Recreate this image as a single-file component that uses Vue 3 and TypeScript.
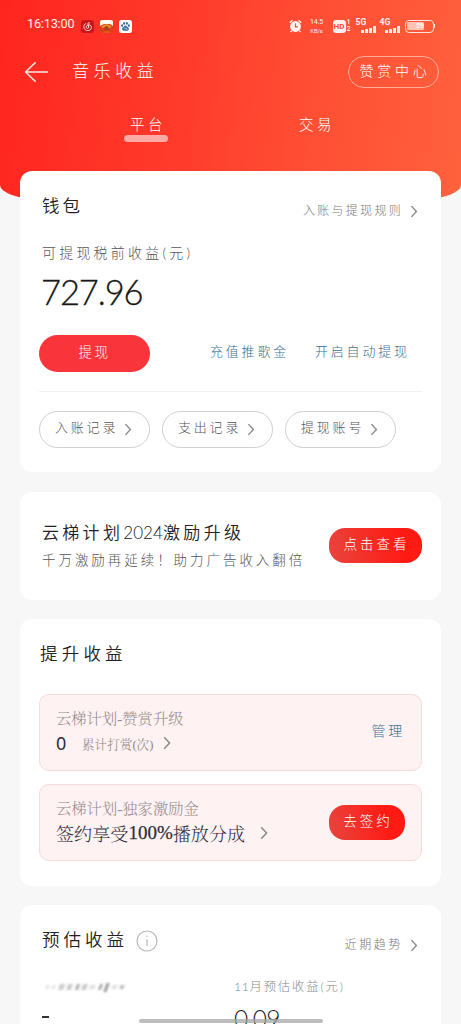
<script setup lang="ts">
interface LinkPill {
  label: string
}

const records: LinkPill[] = [{ label: '入账记录' }, { label: '支出记录' }, { label: '提现账号' }]
const bars: number[] = [3, 4, 5.5, 7]
</script>

<template>
  <main class="page">
    <svg class="sprite" width="0" height="0">
      <symbol id="chevron" viewBox="0 0 8 14">
        <path d="M1.2 1.2 L6.6 7 L1.2 12.8" fill="none" stroke="currentColor" stroke-width="1.5" />
      </symbol>
    </svg>

    <header class="header">
      <div class="status">
        <span class="clock">16:13:00</span>
        <svg class="app first" viewBox="0 0 13 13">
          <rect width="13" height="13" rx="3" fill="#c9151b" />
          <path d="M8.8 3 C7.3 2.3 6.7 3.1 7 4.3 L7.7 7.1 C7.8 8.8 5.4 8.9 5.2 7.3 C5 5.7 6.5 4.8 8 4.9 C11 5.2 11.2 9.2 8.4 10.3 C5.5 11.3 2.7 9.4 2.8 6.7 C2.9 5.1 3.8 4 5 3.5" fill="none" stroke="#ffdcd8" stroke-width="1" />
        </svg>
        <svg class="app" viewBox="0 0 13 13">
          <rect width="13" height="13" rx="2.5" fill="#e23b1d" />
          <path d="M0 1.5 Q0 0 2 0 H11 Q13 0 13 1.5 V6 L10 4 H4 L0 6Z" fill="#fff2df" />
          <path d="M3 0 H10 V3 H3Z" fill="#fff" />
          <path d="M1 7 Q6.5 1.5 12 7 L9 8 H4Z" fill="#e9962c" />
          <circle cx="6.5" cy="8.4" r="2.3" fill="#a84318" />
          <path d="M2 13 Q6.5 8 11 13Z" fill="#dc5c20" />
        </svg>
        <svg class="app" viewBox="0 0 13 13">
          <rect width="13" height="13" rx="2.5" fill="#fff" />
          <g fill="#386e9c">
            <ellipse cx="3.1" cy="5.6" rx="1" ry="1.4" />
            <ellipse cx="5.1" cy="3.4" rx="1" ry="1.4" />
            <ellipse cx="7.9" cy="3.4" rx="1" ry="1.4" />
            <ellipse cx="9.9" cy="5.6" rx="1" ry="1.4" />
            <path d="M6.5 5.4 C7.8 5.4 8 6.6 9.2 7.6 C10.6 9 9.8 10.9 8 10.7 H5 C3.2 10.9 2.4 9 3.8 7.6 C5 6.6 5.2 5.4 6.5 5.4Z" />
          </g>
          <path d="M5.8 7.6 V9.4 M7.3 7.6 V9.2 H8.4" stroke="#fff" stroke-width=".6" fill="none" />
        </svg>

        <div class="status-right">
          <svg class="alarm" viewBox="0 0 13 14">
            <circle cx="6.5" cy="7.5" r="5.4" fill="#fff3ee" />
            <path d="M.8 3.7 L3.4 1.3 M12.2 3.7 L9.6 1.3 M2.8 11.6 L1.6 13 M10.2 11.6 L11.4 13" stroke="#fff3ee" stroke-width="1.4" />
            <path d="M6.5 4.5 V7.9 H8.9" stroke="#ff4c30" stroke-width="1.2" fill="none" />
          </svg>
          <div class="speed"><span>14.5</span><span>KB/s</span></div>
          <span class="hd">HD</span>
          <div class="sim"><span>1</span><span>2</span></div>
          <div class="signal">
            <span class="net">5G</span>
            <div class="bars"><i v-for="b in bars" :key="b" :style="{ height: b + 'px' }"></i></div>
          </div>
          <div class="signal second">
            <span class="net">4G</span>
            <div class="bars"><i v-for="b in bars" :key="b" :style="{ height: b + 'px' }"></i></div>
          </div>
          <div class="battery"><span class="charge">59</span></div>
          <i class="nub"></i>
        </div>
      </div>

      <div class="titlebar">
        <svg class="back" viewBox="0 0 26 22">
          <path d="M25 11 H1.8 M12 1 L1.6 11 L12 21" fill="none" stroke="#ffe6e2" stroke-width="1.5" />
        </svg>
        <h1>音乐收益</h1>
        <button class="center">赞赏中心</button>
      </div>

      <nav class="tabs">
        <a class="tab active">平台</a>
        <a class="tab">交易</a>
      </nav>
    </header>

    <section class="card wallet">
      <div class="row wallet-head">
        <h2>钱包</h2>
        <a class="more">入账与提现规则<svg class="chev"><use href="#chevron" /></svg></a>
      </div>
      <p class="caption">可提现税前收益(元)</p>
      <p class="amount">727.96</p>
      <div class="row actions">
        <button class="withdraw">提现</button>
        <a class="blue charge-link">充值推歌金</a>
        <a class="blue">开启自动提现</a>
      </div>
      <div class="pills">
        <button v-for="r in records" :key="r.label" class="pill">
          {{ r.label }}<svg class="chev"><use href="#chevron" /></svg>
        </button>
      </div>
    </section>

    <section class="card plan">
      <div>
        <h3>云梯计划<span class="year">2024</span>激励升级</h3>
        <p class="sub">千万激励再延续！助力广告收入翻倍</p>
      </div>
      <button class="cta look">点击查看</button>
    </section>

    <section class="card boost">
      <h2>提升收益</h2>
      <div class="box">
        <div>
          <p class="box-title">云梯计划-赞赏升级</p>
          <p class="box-line"><b class="zero">0</b><span class="small">累计打赏(次)</span><svg class="chev big"><use href="#chevron" /></svg></p>
        </div>
        <a class="blue manage">管理</a>
      </div>
      <div class="box">
        <div>
          <p class="box-title">云梯计划-独家激励金</p>
          <p class="box-line strong">签约享受<span class="pct">100%</span>播放分成<svg class="chev big far"><use href="#chevron" /></svg></p>
        </div>
        <button class="cta sign">去签约</button>
      </div>
    </section>

    <section class="card estimate">
      <div class="row est-head">
        <h2>预估收益</h2>
        <svg class="info" viewBox="0 0 22 22">
          <circle cx="11" cy="11" r="10" fill="none" stroke="#b4b4b4" stroke-width="1.1" />
          <path d="M11 9.3 V16 M11 5.7 V7.1" stroke="#b4b4b4" stroke-width="1.2" />
        </svg>
        <a class="more">近期趋势<svg class="chev"><use href="#chevron" /></svg></a>
      </div>
      <div class="cols">
        <div class="col">
          <div class="smudge"><i v-for="n in 11" :key="n" :class="'m' + n"></i></div>
          <p class="dash"></p>
        </div>
        <div class="col">
          <p class="month"><span class="num">11</span>月预估收益(元)</p>
          <p class="value">0.09</p>
        </div>
      </div>
    </section>
    <div class="home-bar"></div>
  </main>
</template>

<style>
body {
  margin: 0;
  overflow: hidden;
}
</style>

<style scoped>
* {
  box-sizing: border-box;
}
h1, h2, h3, p {
  margin: 0;
  font-weight: 300;
}
button {
  border: 0;
  padding: 0;
  background: none;
  font-family: inherit;
  font-weight: 300;
}
a, span, h1, h2, h3, p, button {
  white-space: nowrap;
}
.page {
  position: relative;
  width: 461px;
  height: 1024px;
  overflow: hidden;
  background: #f7f7f7;
  font-family: Lato, "Noto Sans CJK SC", sans-serif;
  font-weight: 300;
  color: #333;
}
.sprite {
  display: block;
}
.header {
  height: 199px;
  margin-bottom: -28px;
  background: linear-gradient(97deg, #ff251f 0%, #ff3b2b 40%, #ff4d33 65%, #ff613d 100%);
  border-radius: 0 0 40px 40px / 0 0 14px 14px;
}
.status {
  display: flex;
  align-items: center;
  height: 52px;
  padding: 0 26px 0 27px;
  color: #fff0ec;
}
.clock {
  width: 54px;
  font: 400 12.7px/16px Roboto, sans-serif;
  letter-spacing: -.2px;
  margin-top: -4px;
}
.app {
  width: 13px;
  height: 13px;
  margin-right: 6px;
}
.status-right {
  display: flex;
  align-items: center;
  margin-left: auto;
}
.alarm {
  width: 13px;
  height: 14px;
}
.speed {
  display: flex;
  flex-direction: column;
  justify-content: space-between;
  align-items: center;
  width: 16px;
  height: 17px;
  margin-left: 7px;
  font: 400 7px/8px Roboto, sans-serif;
  letter-spacing: -.2px;
}
.speed span:last-child {
  font-size: 6px;
}
.hd {
  width: 13px;
  height: 13px;
  margin-left: 8px;
  border-radius: 3px;
  background: #fff0ec;
  color: #f84d34;
  font: 700 8px/13px Roboto, sans-serif;
  text-align: center;
}
.sim {
  display: flex;
  flex-direction: column;
  margin-left: 1px;
  width: 5px;
  font: 500 7px/7px Roboto, sans-serif;
}
.signal {
  position: relative;
  width: 20px;
  height: 14px;
  margin-left: 4px;
}
.net {
  display: block;
  margin-top: -1px;
  font: 700 8.5px/8px Roboto, sans-serif;
}
.bars {
  position: absolute;
  right: 0;
  bottom: 0;
  display: flex;
  align-items: flex-end;
  gap: 1px;
}
.bars i {
  width: 3px;
  background: #fff0ec;
}
.battery {
  width: 29px;
  height: 13px;
  margin-left: 5px;
  padding: 1.5px;
  border: 1px solid #ffe3dc;
  border-radius: 4px;
}
.charge {
  display: block;
  width: 17px;
  height: 8px;
  border-radius: 1.5px;
  background: #ffc2b4;
  font: 500 7px/8px Roboto, sans-serif;
  text-align: right;
  color: #fff;
}
.nub {
  width: 1.5px;
  height: 4px;
  background: #ffe3dc;
}
.titlebar {
  display: flex;
  align-items: center;
  height: 40px;
  padding: 0 22px 0 24px;
}
.back {
  width: 25px;
  height: 22px;
}
h1 {
  margin: -3px 0 0 23px;
  font-size: 17px;
  line-height: 24px;
  letter-spacing: 4.6px;
  color: #fff;
}
.center {
  width: 91px;
  height: 32px;
  margin-left: auto;
  padding: 0 0 4px 3px;
  border: 1px solid #ffad9c;
  border-radius: 16px;
  font-size: 14px;
  letter-spacing: 3.8px;
  color: #fff;
}
.tabs {
  display: flex;
  padding: 23px 0 0 124px;
}
.tab {
  position: relative;
  width: 44px;
  height: 27px;
  margin-right: 125px;
  padding-left: 6px;
  font-size: 14.5px;
  line-height: 20px;
  letter-spacing: 3.5px;
  color: #fff;
}
.active::after {
  content: "";
  display: block;
  width: 44px;
  height: 7px;
  margin-left: -6px;
  border-radius: 3.5px;
  background: #ffaaa5;
}
.card {
  position: relative;
  width: 421px;
  margin: 0 20px 20px;
  border-radius: 12px;
  background: #fff;
}
.row {
  display: flex;
  align-items: center;
}
.wallet {
  height: 301px;
  padding: 23px 19px 0;
  margin-bottom: 20px;
}
h2 {
  font-size: 17.5px;
  line-height: 24px;
  letter-spacing: 4.2px;
  color: #222;
  font-weight: 350;
}
.wallet-head {
  height: 24px;
  padding: 0 4px 0 3px;
}
.wallet-head h2 {
  letter-spacing: 3px;
}
.more {
  display: flex;
  align-items: center;
  margin-left: auto;
  font-size: 12px;
  letter-spacing: 2.3px;
  color: #777;
}
.wallet .more {
  margin-top: 6px;
}
.chev {
  width: 8px;
  height: 13px;
  color: #888;
}
.more .chev {
  margin: 4px 0 0 7px;
}
.caption {
  margin: 25px 0 0 3px;
  font-size: 14px;
  line-height: 20px;
  letter-spacing: 3.2px;
  color: #555;
}
.amount {
  margin: 8px 0 0 2px;
  font: 300 34.5px/42px Lato, sans-serif;
  letter-spacing: -1.1px;
  -webkit-text-stroke: .3px #181818;
  color: #181818;
}
.actions {
  height: 37px;
  margin-top: 22px;
}
.withdraw {
  width: 111px;
  height: 37px;
  padding-bottom: 5px;
  border-radius: 19px;
  background: #fa343b;
  color: #fff;
  font-size: 13.5px;
  letter-spacing: 2.5px;
}
.blue {
  margin-top: -6px;
  font-size: 13px;
  letter-spacing: 2.8px;
  color: #39718f;
}
.charge-link {
  margin: -6px 26px 0 60px;
}
.pills {
  display: flex;
  gap: 12px;
  margin-top: 19px;
  padding-top: 19px;
  border-top: 1px solid #f0f0f0;
}
.pill {
  display: flex;
  align-items: center;
  width: 111px;
  height: 37px;
  padding: 0 0 7px 15px;
  border: 1px solid #d0d0d0;
  border-radius: 19px;
  color: #555;
  font-size: 13px;
  letter-spacing: 2.8px;
}
.pill .chev {
  margin: 7px 0 0 6px;
}
.plan {
  display: flex;
  align-items: flex-start;
  justify-content: space-between;
  height: 108px;
  margin-bottom: 19px;
  padding: 29px 19px 0 22px;
}
h3 {
  font-size: 17px;
  line-height: 24px;
  letter-spacing: 3.3px;
  font-weight: 350;
  color: #222;
}
.year {
  letter-spacing: .1px;
}
.sub {
  margin-top: 5px;
  font-size: 13.5px;
  line-height: 20px;
  letter-spacing: 2.95px;
  color: #555;
}
.cta {
  height: 35px;
  padding: 0 0 5px 2px;
  border-radius: 16px;
  background: linear-gradient(75deg, #e8453f, #ff1b13 75%);
  color: #fff;
  font-size: 13.5px;
  letter-spacing: 3px;
}
.look {
  width: 93px;
  margin-top: 7px;
}
.boost {
  height: 267px;
  margin-bottom: 19px;
  padding: 23px 19px 0;
}
.boost h2 {
  margin: 0 0 28px 1px;
}
.box {
  display: flex;
  justify-content: space-between;
  height: 77px;
  margin-bottom: 13px;
  padding: 14px 16px 0;
  border: 1px solid #f3dcd9;
  border-radius: 10px;
  background: #fef2f2;
  font-family: "Liberation Serif", "Noto Serif CJK SC", "Noto Sans CJK SC", serif;
}
.box-title {
  font-size: 15.3px;
  line-height: 20px;
  color: #968c8e;
}
.box-line {
  display: flex;
  align-items: center;
  height: 28px;
  color: #2d2d3a;
}
.zero {
  width: 26px;
  font: 400 18px/24px "Noto Sans", sans-serif;
}
.small {
  font-size: 12.6px;
  color: #8e8688;
}
.chev.big {
  height: 14px;
  margin-left: 10px;
}
.chev.far {
  margin-left: 15px;
}
.strong {
  font-size: 18.1px;
}
.pct {
  font-family: "Liberation Serif", serif;
  font-size: 19px;
  -webkit-text-stroke: .25px #2d2d3a;
}
.manage {
  margin-top: 11px;
  font-family: Lato, "Noto Sans CJK SC", sans-serif;
  font-size: 14px;
}
.sign {
  width: 76px;
  margin-top: 6px;
  font-family: Lato, "Noto Sans CJK SC", sans-serif;
}
.estimate {
  height: 119px;
  margin-bottom: 0;
  padding: 23px 22px 0;
  border-radius: 12px 12px 0 0;
}
.est-head {
  height: 24px;
}
.est-head h2 {
  letter-spacing: 4px;
}
.info {
  width: 22px;
  height: 22px;
  margin: 2px 0 0 8px;
}
.est-head .more {
  margin: 6px 1px 0 auto;
  letter-spacing: 2.6px;
}
.cols {
  display: grid;
  grid-template-columns: 192px 1fr;
  margin-top: 26px;
}
.smudge {
  display: flex;
  align-items: center;
  gap: 3.4px;
  height: 18px;
  padding-left: 4px;
  filter: blur(1.2px);
}
.smudge i {
  width: 5px;
  height: 6px;
  background: #ccc;
  transform: skewX(-20deg);
}
.smudge .m1, .smudge .m2 {
  width: 3px;
  height: 4px;
  background: #e2e2e2;
}
.smudge .m5, .smudge .m8 {
  width: 3px;
  background: #aaa;
}
.smudge .m7, .smudge .m10 {
  height: 4px;
  background: #ddd;
}
.smudge .m9 {
  height: 9px;
  width: 3px;
  background: #999;
}
.smudge .m11 {
  width: 4px;
  height: 4px;
  background: #bbb;
}
.dash {
  width: 7px;
  height: 2px;
  margin-top: 20px;
  background: #333;
}
.month {
  font-size: 12.3px;
  line-height: 18px;
  letter-spacing: 1.9px;
  color: #888;
}
.num {
  letter-spacing: .6px;
}
.value {
  margin: 6px 0 0;
  font: 300 24.5px/34px Lato, sans-serif;
  letter-spacing: -.6px;
  color: #181818;
}
.home-bar {
  position: absolute;
  left: 139px;
  top: 1019px;
  width: 184px;
  height: 4px;
  border-radius: 2px;
  background: rgba(165, 165, 165, .75);
}
</style>
